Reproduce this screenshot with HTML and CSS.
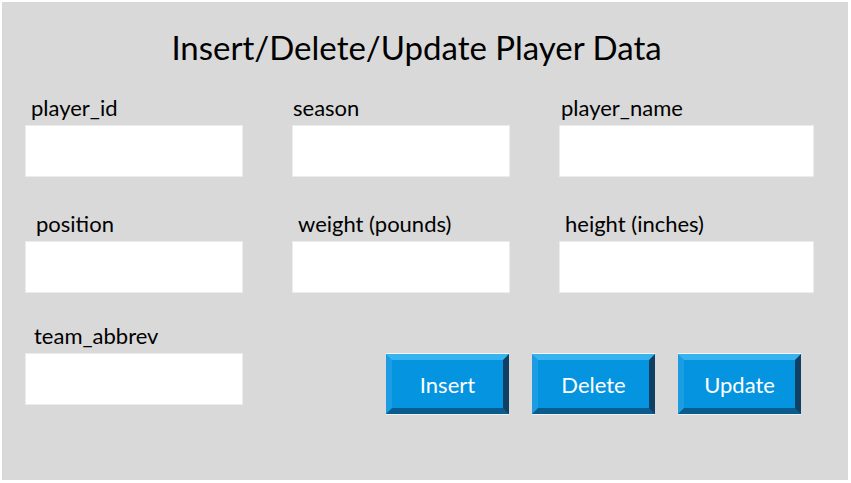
FILE: index.html
```html
<!DOCTYPE html>
<html>
<head>
<meta charset="utf-8">
<link rel="stylesheet" href="styles.css">
</head>
<body>
<div class="panel">
  <h1 class="title">Insert/Delete/Update Player Data</h1>
  <div class="fields">
    <div class="field row1"><label class="lbl l-pid">player_id</label><div class="box"></div></div>
    <div class="field row1"><label class="lbl l-season">season</label><div class="box"></div></div>
    <div class="field row1"><label class="lbl l-pname">player_name</label><div class="box"></div></div>
    <div class="field row2"><label class="lbl l-pos">position</label><div class="box"></div></div>
    <div class="field row2"><label class="lbl l-wt">weight (pounds)</label><div class="box"></div></div>
    <div class="field row2"><label class="lbl l-ht">height (inches)</label><div class="box"></div></div>
    <div class="field row3"><label class="lbl l-team">team_abbrev</label><div class="box"></div></div>
    <div class="actions">
      <button class="btn">Insert</button>
      <button class="btn">Delete</button>
      <button class="btn">Update</button>
    </div>
  </div>
</div>
</body>
</html>
```
FILE: styles.css
```css
html, body { margin: 0; padding: 0; background: #ffffff; }
body { width: 851px; height: 483px; overflow: hidden; }
.panel {
  margin: 2px 3px 3px 2px;
  width: 846px;
  height: 478px;
  box-sizing: border-box;
  background: #d9d9d9;
  font-family: "Lato", "Open Sans", sans-serif;
  color: #000;
  padding-top: 25px;
}
.title {
  margin: 0;
  font-weight: normal;
  font-size: 33px;
  line-height: 40px;
  text-align: center;
  padding-right: 17px;
}
.fields {
  display: grid;
  grid-template-columns: 216px 216px 253px;
  column-gap: 51px;
  padding-left: 24px;
  margin-top: 29px;
}
.field { display: flex; flex-direction: column; }
.row2 { margin-top: 36px; }
.row3 { margin-top: 32px; }
.lbl {
  font-size: 22px;
  line-height: 24px;
  height: 24px;
  padding-bottom: 6px;
}
.l-pid { padding-left: 5px; }
.l-season { padding-left: 0px; }
.l-pname { padding-left: 1px; }
.l-pos { padding-left: 10px; }
.l-wt { padding-left: 5px; }
.l-ht { padding-left: 5px; }
.l-team { padding-left: 8px; }
.box {
  height: 50px;
  background: #ffffff;
  box-shadow: 0 0 0 1px #ececec;
}
.actions {
  grid-column: 2 / 4;
  align-self: end;
  display: flex;
  gap: 23px;
  padding-left: 93px;
  margin-bottom: -10px;
}
.btn {
  width: 123px;
  height: 60px;
  box-sizing: border-box;
  border-width: 6px;
  border-style: solid;
  border-color: #37b3f0 #0f3f62 #0a5c8f #1c9de3;
  background: #0494e0;
  color: #ffffff;
  font-family: "Lato", "Open Sans", sans-serif;
  font-size: 22px;
  padding: 0;
  box-shadow: 0 1px 0 #f0f0f0, 0 -1px 0 #f4f4f4;
}
```
